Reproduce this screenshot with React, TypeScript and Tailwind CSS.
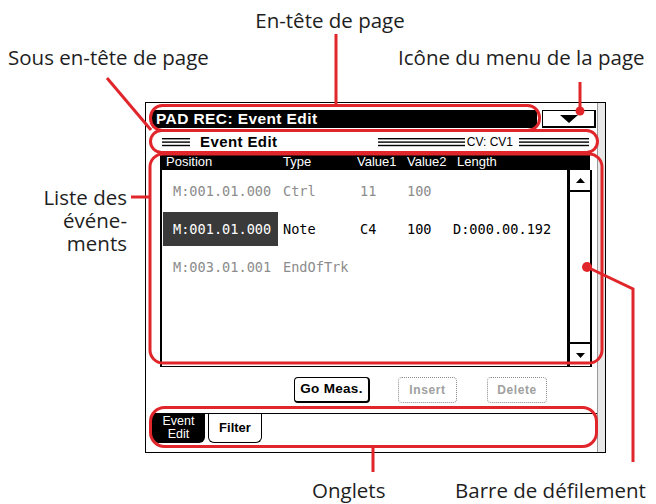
import React from "react";

const RED = "#e0262b";

function Lines({ w }: { w: number }) {
  return (
    <svg width={w} height={10} className="block">
      <rect x={0} y={1} width={w} height={1.4} fill="#000" />
      <rect x={0} y={4.4} width={w} height={1.4} fill="#000" />
      <rect x={0} y={7.8} width={w} height={1.4} fill="#000" />
    </svg>
  );
}

type Row = {
  pos: string;
  type: string;
  v1: string;
  v2: string;
  len: string;
  sel?: boolean;
};

const rows: Row[] = [
  { pos: "M:001.01.000", type: "Ctrl", v1: "11", v2: "100", len: "" },
  { pos: "M:001.01.000", type: "Note", v1: "C4", v2: "100", len: "D:000.00.192", sel: true },
  { pos: "M:003.01.001", type: "EndOfTrk", v1: "", v2: "", len: "" },
];

export default function App() {
  return (
    <div className="relative w-[656px] h-[504px] bg-white overflow-hidden">
      {/* LCD screen */}
      <div className="pt-[102px] pl-[145px]">
        <div className="w-[461px] h-[351px] border border-black flex bg-white font-['Liberation_Sans',sans-serif]">
          <div className="flex-1 flex flex-col">
            {/* Header */}
            <div className="mt-[7px] h-[18px] flex pl-[6px]">
              <div className="w-[385px] h-full bg-black rounded-[2px] pl-[4px] text-white font-bold text-[15.5px] leading-[18px] tracking-[0.4px]">
                PAD REC: Event Edit
              </div>
              <div className="ml-[5px] w-[54px] h-full bg-white border border-black border-r-2 border-b-2 flex items-center justify-center">
                <svg width="18" height="8" className="block">
                  <polygon points="0,0 18,0 9,8" fill="#000" />
                </svg>
              </div>
            </div>
            {/* Sub header */}
            <div className="mt-[5px] h-[18px] flex items-center">
              <div className="ml-[16px]">
                <Lines w={28} />
              </div>
              <div className="ml-[10px] font-bold text-[15px] leading-[18px] tracking-[0.4px] text-black">Event Edit</div>
              <div className="flex-1" />
              <Lines w={87} />
              <div className="ml-[2px] text-[12px] leading-[18px] text-black">CV: CV1</div>
              <div className="ml-[6px]">
                <Lines w={70} />
              </div>
              <div className="w-[8px]" />
            </div>
            {/* Column header */}
            <div className="mt-[2px] ml-[14px] w-[430px] h-[17px] bg-black text-white text-[13px] leading-[17px] flex pl-[6px]">
              <div className="w-[117px]">Position</div>
              <div className="w-[74px]">Type</div>
              <div className="w-[50px]">Value1</div>
              <div className="w-[50px]">Value2</div>
              <div>Length</div>
            </div>
            {/* List body */}
            <div className="ml-[14px] w-[432px] h-[197px] flex">
              <div className="flex-1 border-l-2 border-b border-black flex flex-col pt-[4px] gap-[4px] font-['DejaVu_Sans_Mono',monospace] text-[13.6px]">
                {rows.map((r, i) => (
                  <div key={i} className={`h-[34px] flex items-center ${r.sel ? "text-black" : "text-[#8c8c8c]"}`}>
                    <div
                      className={`ml-[1px] w-[115px] h-full flex items-center pl-[10px] ${
                        r.sel ? "bg-[#3a3a3a] text-white" : ""
                      }`}
                    >
                      {r.pos}
                    </div>
                    <div className="w-[82px] pl-[5px]">{r.type}</div>
                    <div className="w-[47px]">{r.v1}</div>
                    <div className="w-[46px]">{r.v2}</div>
                    <div>{r.len}</div>
                  </div>
                ))}
              </div>
              <div className="w-[25px] h-full border-l-[3px] border-r-2 border-b border-black flex flex-col bg-white">
                <div className="h-[22px] border-b-2 border-black flex items-center justify-center">
                  <svg width="9" height="5" className="block">
                    <polygon points="4.5,0 9,5 0,5" fill="#000" />
                  </svg>
                </div>
                <div className="flex-1" />
                <div className="h-[24px] border-t-2 border-black flex items-center justify-center">
                  <svg width="9" height="5" className="block">
                    <polygon points="0,0 9,0 4.5,5" fill="#000" />
                  </svg>
                </div>
              </div>
            </div>
            {/* Buttons */}
            <div className="mt-[10px] h-[26px] flex">
              <div className="ml-[148px] w-[76px] h-full border border-black border-r-2 border-b-2 rounded-[4px] flex items-center justify-center font-bold text-[13.5px] tracking-[0.3px] text-black">
                Go Meas.
              </div>
              <div className="ml-[28px] w-[59px] h-full border border-dotted border-[#8a8a8a] rounded-[4px] flex items-center justify-center text-[12px] font-bold tracking-[0.6px] text-[#a0a0a0]">
                Insert
              </div>
              <div className="ml-[30px] w-[60px] h-full border border-dotted border-[#8a8a8a] rounded-[4px] flex items-center justify-center text-[12px] font-bold tracking-[0.6px] text-[#a0a0a0]">
                Delete
              </div>
            </div>
            {/* Tabs */}
            <div className="mt-[10px] h-[30px] flex">
              <div className="ml-[6px] w-[53px] h-full bg-black rounded-b-[6px] text-white text-[12.5px] leading-[13px] flex flex-col items-center justify-center">
                <span>Event</span>
                <span>Edit</span>
              </div>
              <div className="flex-1 border-t border-black flex">
                <div className="ml-[3px] w-[54px] h-full border-x border-b border-black rounded-b-[6px] flex items-center justify-center text-[13px] font-bold text-black">
                  Filter
                </div>
              </div>
            </div>
          </div>
          <div className="w-[8px] h-full bg-[#e8e8e8] border-l border-[#9a9a9a]" />
        </div>
      </div>

      {/* Annotation drawing: outlines, leader lines and dots */}
      <svg className="absolute left-0 top-0 pointer-events-none" width={656} height={504}>
        <g fill="none" stroke={RED} strokeWidth={3}>
          <rect x={150.5} y={105.5} width={389} height={25} rx={12} />
          <rect x={150.5} y={130.5} width={447} height={22} rx={11} />
          <rect x={150} y={154} width={452} height={209} rx={13} />
          <rect x={150.5} y={407.5} width={446} height={39} rx={14} />
          <path d="M336 34 V106" />
          <path d="M107 78 L151 130" />
          <path d="M580 82 V110" />
          <path d="M131 197 H149" />
          <path d="M587 267 L633 289 V462" />
          <path d="M373 447 V472" />
        </g>
        <circle cx={580} cy={111} r={4.5} fill={RED} />
        <circle cx={587} cy={267} r={5} fill={RED} />
      </svg>

      {/* Annotation labels */}
      <div className="absolute inset-0 pointer-events-none font-['Open_Sans',sans-serif] text-[20.5px] leading-[24px] text-[#1e1e1e]">
        <div className="absolute left-[230px] top-[8px] w-[200px] text-center">En-tête de page</div>
        <div className="absolute left-[8px] top-[45px]">Sous en-tête de page</div>
        <div className="absolute left-[398px] top-[45px]">Icône du menu de la page</div>
        <div className="absolute left-[27px] top-[186px] w-[100px] text-right leading-[23px] [hyphens:manual]">
          Liste des événe{"\u00AD"}ments
        </div>
        <div className="absolute left-[312px] top-[478px]">Onglets</div>
        <div className="absolute left-[455px] top-[478px]">Barre de défilement</div>
      </div>
    </div>
  );
}
